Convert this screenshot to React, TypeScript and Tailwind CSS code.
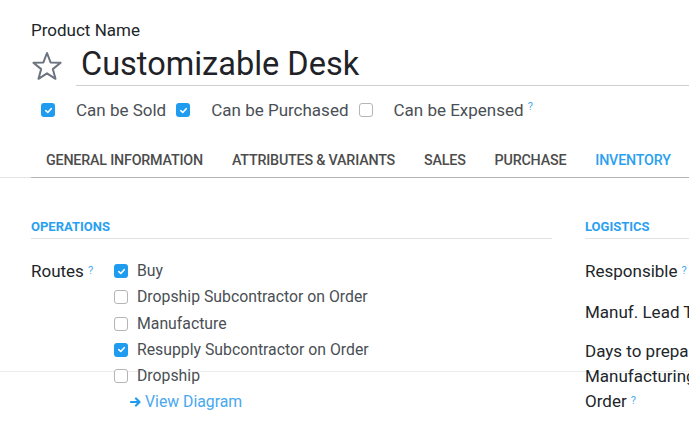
import React from 'react';

const Box = ({ checked }: { checked?: boolean }) =>
  checked ? (
    <span className="w-[14px] h-[14px] rounded-[3px] bg-[#1f9cf0] flex items-center justify-center shrink-0">
      <svg width="9" height="9" viewBox="0 0 10 10"><path d="M2 5.2 L4.2 7.2 L8 3" fill="none" stroke="white" strokeWidth="1.8" strokeLinecap="round" strokeLinejoin="round" /></svg>
    </span>
  ) : (
    <span className="block w-[14px] h-[14px] rounded-[3px] border border-[#b5b5b5] bg-white shrink-0" />
  );

const Help = () => <sup className="text-[#49a8ee] text-[11px] ml-[4px] relative -top-[3px]">?</sup>;

const tabs = ['GENERAL INFORMATION', 'ATTRIBUTES & VARIANTS', 'SALES', 'PURCHASE', 'INVENTORY'];

const routes: [string, boolean][] = [
  ['Buy', true],
  ['Dropship Subcontractor on Order', false],
  ['Manufacture', false],
  ['Resupply Subcontractor on Order', true],
  ['Dropship', false],
];

export default function App() {
  return (
    <div className="relative w-[689px] h-[423px] overflow-hidden bg-white text-[#212529]" style={{ fontFamily: 'Roboto, "Noto Sans", sans-serif' }}>
      <div className="absolute left-0 right-0 top-[371px] h-px bg-[#ececec]" />

      <div className="relative">
        <div className="pl-[31px] pt-[20px]">
          <div className="text-[17px] leading-[20px]">Product Name</div>
          <div className="flex items-center mt-[5px]">
            <svg width="32" height="30" viewBox="0 0 32 30" className="shrink-0">
              <path d="M16 2 L19.6 11.4 L29.6 11.8 L21.8 18.1 L24.5 27.8 L16 22.3 L7.5 27.8 L10.2 18.1 L2.4 11.8 L12.4 11.4 Z" fill="none" stroke="#6c7480" strokeWidth="2" strokeLinejoin="round" />
            </svg>
            <div className="ml-[13px] flex-1 border-b border-[#cfcfcf] pl-[5px] pb-[2px] text-[32.5px] leading-[38px] text-[#1f2328]">Customizable Desk</div>
          </div>
          <div className="flex items-center mt-[13px] pl-[10px] text-[17px] leading-[22px] text-[#4a4f55]">
            <Box checked />
            <span className="ml-[21px]">Can be Sold</span>
            <span className="ml-[10px]"><Box checked /></span>
            <span className="ml-[21px]">Can be Purchased</span>
            <span className="ml-[10px]"><Box /></span>
            <span className="ml-[21px]">Can be Expensed</span>
            <Help />
          </div>
        </div>

        <div className="mt-[30px] flex">
          <div className="w-[31px] border-b border-[#e4e4e4]" />
          <div className="flex-1 flex border-b border-[#b4b4b4] pl-[15px] gap-[29px] pb-[8px] text-[14.3px] leading-[18px] font-medium tracking-[-0.2px] text-[#4c4c4c] whitespace-nowrap">
            {tabs.map(t => (
              <span key={t} className={t === 'INVENTORY' ? 'text-[#2aa0f0]' : ''}>{t}</span>
            ))}
          </div>
        </div>

        <div className="flex mt-[41px] pl-[31px]">
          <div className="w-[521px]">
            <div className="text-[13px] leading-[16px] font-bold text-[#2aa0f0] border-b border-[#e2e2e2] pb-[3px]">OPERATIONS</div>
            <div className="flex mt-[21px]">
              <div className="w-[83px] text-[17px] leading-[22px]">Routes<Help /></div>
              <div className="flex flex-col gap-[4.3px] text-[15.8px] text-[#4a4f55]">
                {routes.map(([label, on]) => (
                  <div key={label} className="flex items-center gap-[9px] leading-[22px]">
                    <Box checked={on} />
                    <span>{label}</span>
                  </div>
                ))}
                <div className="flex items-center gap-[3px] pl-[16px] text-[#49a8ee] leading-[22px]">
                  <svg width="12" height="12" viewBox="0 0 12 12"><path d="M1 6 H9 M6 2.5 L9.5 6 L6 9.5" fill="none" stroke="#1f9cf0" strokeWidth="2.2" strokeLinecap="round" strokeLinejoin="round" /></svg>
                  <span>View Diagram</span>
                </div>
              </div>
            </div>
          </div>
          <div className="ml-[33px] flex-1 min-w-0 whitespace-nowrap overflow-hidden">
            <div className="text-[13px] leading-[16px] font-bold text-[#2aa0f0] border-b border-[#e2e2e2] pb-[3px]">LOGISTICS</div>
            <div className="mt-[21px] text-[17px] leading-[22px]">
              <div>Responsible<Help /></div>
              <div className="mt-[19px]">Manuf. Lead Time</div>
              <div className="mt-[16px] leading-[25px]">Days to prepare<br />Manufacturing<br />Order<Help /></div>
            </div>
          </div>
        </div>
      </div>
    </div>
  );
}
